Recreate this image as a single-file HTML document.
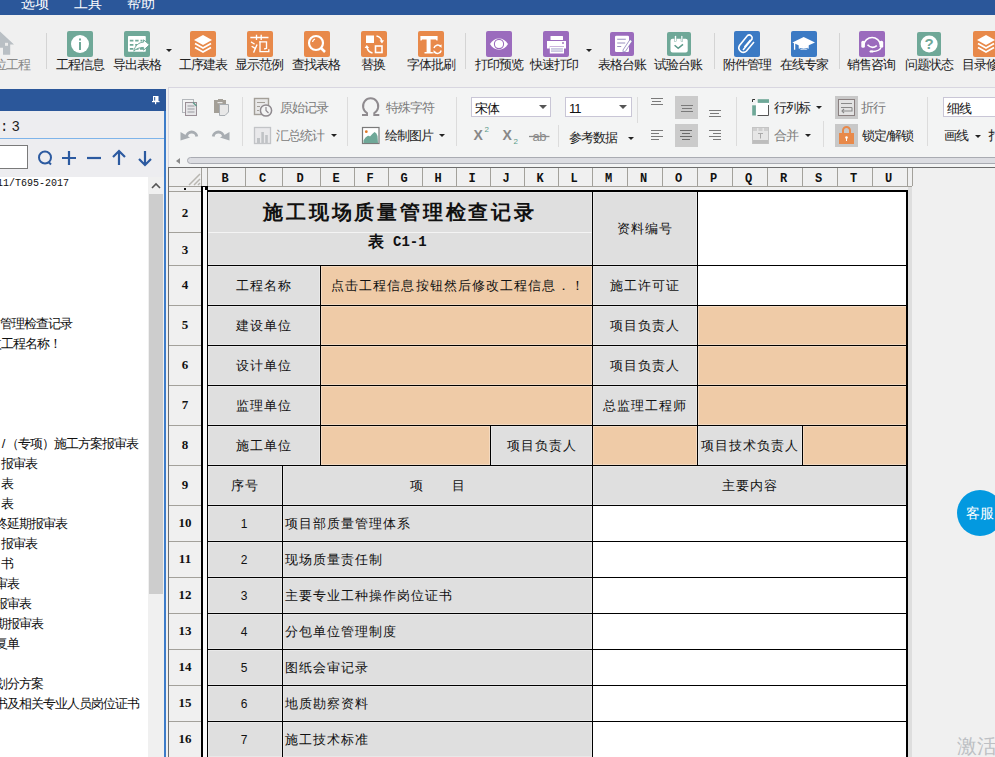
<!DOCTYPE html><html><head><meta charset="utf-8"><style>
*{margin:0;padding:0;box-sizing:border-box}
html,body{width:995px;height:757px;overflow:hidden;background:#f0f0f0;font-family:"Liberation Sans",sans-serif;position:relative}
.abs{position:absolute}
.menu{position:absolute;left:0;top:0;width:995px;height:15px;background:#2b579a;overflow:hidden}
.menu span{position:absolute;top:-5px;color:#fff;font-size:14px;line-height:16px}
.ic{position:absolute;top:31px;width:26px;height:26px;border-radius:2px}
.lbl{position:absolute;top:57px;font-size:13px;letter-spacing:-1px;line-height:16px;color:#222;white-space:nowrap;text-align:center}
.sep{position:absolute;width:1px;background:#d4d4d4}
.arr{position:absolute;width:0;height:0;border-left:3px solid transparent;border-right:3px solid transparent;border-top:3px solid #222}
.tb{position:absolute;font-size:13px;letter-spacing:-1px;line-height:14px;white-space:nowrap}
.cell{position:absolute;font-size:12px;white-space:nowrap;display:flex;align-items:center;justify-content:center;overflow:hidden;box-shadow:inset 0 0 0 1px rgba(255,255,255,.3)}
</style></head><body>
<div class="menu"><span style="left:21px">选项</span><span style="left:74px">工具</span><span style="left:127px">帮助</span></div><svg class="ic" style="left:67px;top:31px;width:26px;height:26px;background:#6fa898" width="26" height="26" viewBox="0 0 26 26"><circle cx="13" cy="13" r="9" fill="#ffffff"/><rect x="12" y="11" width="2" height="8" fill="#6fa898"/><rect x="12" y="7.5" width="2" height="2" fill="#6fa898"/></svg><div class="lbl" style="left:39.5px;width:80px">工程信息</div><svg class="ic" style="left:124px;top:31px;width:26px;height:26px;background:#6fa898" width="26" height="26" viewBox="0 0 26 26"><rect x="4" y="5" width="17.8" height="15.7" rx="0.8" fill="#ffffff"/><path d="M5.8 9.7h3.6M11.2 9.7h3.4M16.5 9.7h2M5.8 13.9h3.6M11.2 13.9h3.4M5.8 17.9h3.6M11.2 17.9h3.4M16 17.9h3" stroke="#6fa898" stroke-width="1.8"/><path d="M9.8 20.2 C11 14.5 15 11.3 19.6 11.1 L19.6 8.8 L25.4 13.8 L19.6 19.2 L19.6 16.4 C15.5 16.4 12.3 17.6 9.8 20.2Z" fill="#ffffff" stroke="#6fa898" stroke-width="1"/></svg><div class="lbl" style="left:97px;width:80px">导出表格</div><svg class="ic" style="left:190px;top:31px;width:26px;height:26px;background:#e8894a" width="26" height="26" viewBox="0 0 26 26"><path d="M13 4 L22 9 L13 14 L4 9Z" fill="#ffffff"/><path d="M5 12.5 L13 17 L21 12.5" fill="none" stroke="#ffffff" stroke-width="1.8"/><path d="M5 16.5 L13 21 L21 16.5" fill="none" stroke="#ffffff" stroke-width="1.8"/></svg><div class="lbl" style="left:163px;width:80px">工序建表</div><svg class="ic" style="left:247px;top:31px;width:26px;height:26px;background:#e8894a" width="26" height="26" viewBox="0 0 26 26"><g stroke="#ffffff" stroke-width="1.35" fill="none" stroke-linecap="square"><path d="M4 6.5 H20.8"/><path d="M9.5 4.3 V8.3 M14.2 4.3 V8.3"/><path d="M4.6 11.2 L7 12.8 M5.2 15.6 L7.5 17"/><path d="M6.8 21 L9.8 14.2"/><path d="M13 10.8 H19.5 V17.3 L17.8 17.8"/><path d="M13 10.8 V20.6 H21.8 V19"/></g></svg><div class="lbl" style="left:219px;width:80px">显示范例</div><svg class="ic" style="left:304px;top:31px;width:26px;height:26px;background:#e8894a" width="26" height="26" viewBox="0 0 26 26"><circle cx="12" cy="12" r="7" fill="none" stroke="#ffffff" stroke-width="2.2"/><path d="M17 17 L21 21" stroke="#ffffff" stroke-width="2.5"/><path d="M8.5 11 A4 4 0 0 1 11 8" stroke="#ffffff" stroke-width="1.3" fill="none"/></svg><div class="lbl" style="left:276px;width:80px">查找表格</div><svg class="ic" style="left:361px;top:31px;width:26px;height:26px;background:#e8894a" width="26" height="26" viewBox="0 0 26 26"><rect x="5" y="4.5" width="8" height="7.5" fill="#ffffff"/><rect x="14.5" y="15" width="6.5" height="6.5" fill="none" stroke="#ffffff" stroke-width="1.6"/><path d="M15.5 5 Q20 6 20.8 10" stroke="#ffffff" stroke-width="1.5" fill="none"/><path d="M18.6 9.5 L21 12.5 L23 9.3Z" fill="#ffffff"/><path d="M11.5 22 Q7 21 6 16.5" stroke="#ffffff" stroke-width="1.5" fill="none"/><path d="M3.6 17 L5.8 14 L8.2 17Z" fill="#ffffff"/></svg><div class="lbl" style="left:333px;width:80px">替换</div><svg class="ic" style="left:418px;top:31px;width:26px;height:26px;background:#e8894a" width="26" height="26" viewBox="0 0 26 26"><path d="M2.4 5 H19.6 V9.5 H18.5 L17.8 8.5 H12.6 V21 H14.8 V22.5 H6.5 V21 H8.6 V8.5 H4.2 L3.5 9.5 H2.4Z" fill="#ffffff"/><path d="M16 17 A3.7 3.7 0 0 1 22.6 15.6" stroke="#ffffff" stroke-width="1.5" fill="none"/><path d="M23.2 19.5 A3.7 3.7 0 0 1 16.4 20.6" stroke="#ffffff" stroke-width="1.5" fill="none"/><path d="M21 14.5 L23.6 13.5 L23.5 17Z" fill="#ffffff"/><path d="M18 21.5 L15.4 22.5 L15.6 19Z" fill="#ffffff"/></svg><div class="lbl" style="left:391px;width:80px">字体批刷</div><svg class="ic" style="left:486px;top:31px;width:26px;height:26px;background:#9b6bbd" width="26" height="26" viewBox="0 0 26 26"><path d="M4 13 C8 5.5 18 5.5 22 13 C18 20.5 8 20.5 4 13Z" fill="#ffffff"/><circle cx="13" cy="13" r="4.6" fill="#ffffff" stroke="#9b6bbd" stroke-width="1.1"/><circle cx="13" cy="13" r="2.6" fill="#ffffff"/></svg><div class="lbl" style="left:458.5px;width:80px">打印预览</div><svg class="ic" style="left:543px;top:31px;width:26px;height:26px;background:#9b6bbd" width="26" height="26" viewBox="0 0 26 26"><rect x="7.5" y="5" width="12.5" height="4" rx="0.5" fill="#ffffff"/><path d="M4 10 H23 V17.5 H21 V15 H6.8 V17.5 H4Z" fill="#ffffff"/><circle cx="20" cy="12" r="0.9" fill="#9b6bbd"/><rect x="6.8" y="15.5" width="14.2" height="7" fill="#ffffff"/><rect x="8" y="17" width="11.8" height="4" fill="#c9c7e0"/><path d="M8 18.3h11.8M8 19.7h11.8" stroke="#e8e8f2" stroke-width="0.5"/></svg><div class="lbl" style="left:514px;width:80px">快速打印</div><svg class="ic" style="left:610px;top:32px;width:24px;height:24px;background:#9b6bbd" width="24" height="24" viewBox="0 0 24 24"><rect x="5" y="3.7" width="14" height="16.3" rx="1.2" fill="#ffffff"/><path d="M7.2 7.3h8.6M7.2 11h8M7.2 14.5h4" stroke="#9a8fbf" stroke-width="1.1"/><path d="M13 18 L20 7.5 L22.3 9 L15.3 19.5 L13.2 20.2Z" fill="#ffffff" stroke="#7a6fb0" stroke-width="0.7"/></svg><div class="lbl" style="left:582px;width:80px">表格台账</div><svg class="ic" style="left:667px;top:32px;width:24px;height:24px;background:#6fa898" width="24" height="24" viewBox="0 0 24 24"><rect x="3.5" y="6.8" width="17.2" height="13.6" rx="2" fill="#ffffff"/><rect x="7.6" y="3.7" width="1.8" height="6" fill="#ffffff" stroke="#5a9a8a" stroke-width="0.4"/><rect x="14" y="3.7" width="1.8" height="6" fill="#ffffff" stroke="#5a9a8a" stroke-width="0.4"/><path d="M7.6 13.2 L11.2 16.3 L16 12.3" stroke="#5a9a8a" stroke-width="1.5" fill="none"/></svg><div class="lbl" style="left:638px;width:80px">试验台账</div><svg class="ic" style="left:734px;top:31px;width:26px;height:26px;background:#3b7ac4" width="26" height="26" viewBox="0 0 26 26"><path d="M9 19 L18 8 A3 3 0 0 0 13.5 4.5 L5.5 14.5 A4.5 4.5 0 0 0 12.5 20 L20 11" fill="none" stroke="#ffffff" stroke-width="1.6"/><path d="M10.5 16 L16.5 9" stroke="#ffffff" stroke-width="1.6"/></svg><div class="lbl" style="left:707px;width:80px">附件管理</div><svg class="ic" style="left:791px;top:31px;width:26px;height:26px;background:#3b7ac4" width="26" height="26" viewBox="0 0 26 26"><path d="M1.4 11.5 L12.7 6 L24 11.5 L12.7 16.4Z" fill="#ffffff"/><path d="M7.7 13.5 V17.5 Q12.7 20.5 17.7 17.5 V13.5 L12.7 16Z" fill="#ffffff"/><path d="M8.5 17.3 Q12.7 19 17 17.3" stroke="#3b7ac4" stroke-width="0.8" fill="none"/><path d="M3.6 12 V18.7" stroke="#ffffff" stroke-width="1.3"/></svg><div class="lbl" style="left:764px;width:80px">在线专家</div><svg class="ic" style="left:859px;top:31px;width:26px;height:26px;background:#9b6bbd" width="26" height="26" viewBox="0 0 26 26"><path d="M4.6 14 A8.6 8.8 0 0 1 21.6 14" stroke="#ffffff" stroke-width="1.6" fill="none"/><rect x="2.3" y="9.8" width="3.6" height="7" rx="1.6" fill="#ffffff"/><rect x="20.6" y="9.8" width="3.6" height="7" rx="1.6" fill="#ffffff"/><path d="M8.5 13.8 Q13 18.5 17.8 14.6" stroke="#ffffff" stroke-width="1.6" fill="none"/><path d="M22 16.5 Q21 20 13.5 20.5" stroke="#ffffff" stroke-width="1.3" fill="none"/><ellipse cx="12.5" cy="20.4" rx="2" ry="1.2" fill="#ffffff"/></svg><div class="lbl" style="left:831px;width:80px">销售咨询</div><svg class="ic" style="left:917px;top:32px;width:24px;height:24px;background:#6fa898" width="24" height="24" viewBox="0 0 24 24"><circle cx="12.15" cy="11.9" r="8.5" fill="#ffffff"/><text x="12.2" y="17.1" text-anchor="middle" font-size="15" font-weight="bold" fill="#6fa898" font-family="Liberation Sans">?</text></svg><div class="lbl" style="left:889px;width:80px">问题状态</div><svg class="ic" style="left:973px;top:31px;width:26px;height:26px;background:#e8894a" width="26" height="26" viewBox="0 0 26 26"><path d="M13 4 L22 9 L13 14 L4 9Z" fill="#ffffff"/><path d="M5 12.5 L13 17 L21 12.5" fill="none" stroke="#ffffff" stroke-width="1.8"/><path d="M5 16.5 L13 21 L21 16.5" fill="none" stroke="#ffffff" stroke-width="1.8"/></svg><div class="lbl" style="left:946px;width:80px">目录修改</div><svg class="abs" style="left:0;top:30px" width="16" height="26" viewBox="0 0 16 26"><path d="M0 1.6 L14 14.5 L10.2 14.5 L10.2 24.7 L3 24.7 L3 17.8 L0 17.8 Z" fill="#b9bfc4"/><rect x="5" y="12.8" width="3" height="3" fill="#ececec"/></svg><div class="lbl" style="left:-6px;width:44px;color:#888;text-align:left">位工程</div><div class="sep" style="left:46px;top:33px;height:36px"></div><div class="sep" style="left:465px;top:33px;height:36px"></div><div class="sep" style="left:714px;top:33px;height:36px"></div><div class="sep" style="left:839px;top:33px;height:36px"></div><div class="arr" style="left:166px;top:49px"></div><div class="arr" style="left:586px;top:49px"></div><div class="abs" style="left:0;top:89px;width:166px;height:22px;background:#2b579a"></div><svg class="abs" style="left:151px;top:95px" width="10" height="10" viewBox="0 0 10 10"><rect x="2" y="1" width="5.5" height="5.5" fill="#fff"/><rect x="3.2" y="2" width="1" height="3.6" fill="#2b579a"/><rect x="1" y="6" width="7.5" height="1.2" fill="#fff"/><rect x="4" y="7" width="1.2" height="2.2" fill="#fff"/></svg><div class="abs" style="left:0;top:111px;width:164px;height:27px;background:#ededf0"></div><div class="abs" style="left:0;top:119px;font-size:14px;line-height:16px;color:#222;font-family:'Liberation Mono',monospace">:<span style="color:#222;margin-left:3px">3</span></div><div class="abs" style="left:0;top:138px;width:164px;height:1px;background:#7eb4ea"></div><div class="abs" style="left:0;top:139px;width:164px;height:38px;background:#ededf0"></div><div class="abs" style="left:-2px;top:145px;width:30px;height:24px;background:#fff;border:1px solid #7a7a7a"></div><svg class="abs" style="left:36px;top:148px" width="120" height="22" viewBox="0 0 120 22"><circle cx="9" cy="9.5" r="6" fill="none" stroke="#2c5aa0" stroke-width="2"/><path d="M12.5 14 L15 16.5" stroke="#2c5aa0" stroke-width="2"/><path d="M26 10h14M33 3v14" stroke="#2c5aa0" stroke-width="2.2"/><path d="M51 10h14" stroke="#2c5aa0" stroke-width="2.2"/><path d="M83 3v14M77 9l6-6 6 6" stroke="#2c5aa0" stroke-width="2.2" fill="none"/><path d="M109 3v14M103 11l6 6 6-6" stroke="#2c5aa0" stroke-width="2.2" fill="none"/></svg><div class="abs" style="left:0;top:177px;width:148px;height:580px;background:#fff"></div><div class="abs" style="left:164px;top:111px;width:2px;height:646px;background:#3d7cc9"></div><div class="abs" style="left:-3px;top:177px;height:20px;line-height:14px;font-size:10px;letter-spacing:0px;color:#111;white-space:nowrap;font-family:'Liberation Mono', monospace">11/T695-2017</div><div class="abs" style="left:0px;top:317px;height:20px;line-height:14px;font-size:13px;letter-spacing:-1px;color:#111;white-space:nowrap;font-family:'Liberation Sans', sans-serif">管理检查记录</div><div class="abs" style="left:-11px;top:337px;height:20px;line-height:14px;font-size:13px;letter-spacing:-1px;color:#111;white-space:nowrap;font-family:'Liberation Sans', sans-serif">改工程名称！</div><div class="abs" style="left:0px;top:437px;height:20px;line-height:14px;font-size:13px;letter-spacing:-1px;color:#111;white-space:nowrap;font-family:'Liberation Sans', sans-serif"><span style="display:inline-block;width:6px;text-align:center">/</span>（专项）施工方案报审表</div><div class="abs" style="left:1px;top:457px;height:20px;line-height:14px;font-size:13px;letter-spacing:-1px;color:#111;white-space:nowrap;font-family:'Liberation Sans', sans-serif">报审表</div><div class="abs" style="left:1px;top:477px;height:20px;line-height:14px;font-size:13px;letter-spacing:-1px;color:#111;white-space:nowrap;font-family:'Liberation Sans', sans-serif">表</div><div class="abs" style="left:1px;top:497px;height:20px;line-height:14px;font-size:13px;letter-spacing:-1px;color:#111;white-space:nowrap;font-family:'Liberation Sans', sans-serif">表</div><div class="abs" style="left:-5px;top:517px;height:20px;line-height:14px;font-size:13px;letter-spacing:-1px;color:#111;white-space:nowrap;font-family:'Liberation Sans', sans-serif">终延期报审表</div><div class="abs" style="left:1px;top:537px;height:20px;line-height:14px;font-size:13px;letter-spacing:-1px;color:#111;white-space:nowrap;font-family:'Liberation Sans', sans-serif">报审表</div><div class="abs" style="left:1px;top:557px;height:20px;line-height:14px;font-size:13px;letter-spacing:-1px;color:#111;white-space:nowrap;font-family:'Liberation Sans', sans-serif">书</div><div class="abs" style="left:-5px;top:577px;height:20px;line-height:14px;font-size:13px;letter-spacing:-1px;color:#111;white-space:nowrap;font-family:'Liberation Sans', sans-serif">审表</div><div class="abs" style="left:-5px;top:597px;height:20px;line-height:14px;font-size:13px;letter-spacing:-1px;color:#111;white-space:nowrap;font-family:'Liberation Sans', sans-serif">报审表</div><div class="abs" style="left:-5px;top:617px;height:20px;line-height:14px;font-size:13px;letter-spacing:-1px;color:#111;white-space:nowrap;font-family:'Liberation Sans', sans-serif">期报审表</div><div class="abs" style="left:-5px;top:637px;height:20px;line-height:14px;font-size:13px;letter-spacing:-1px;color:#111;white-space:nowrap;font-family:'Liberation Sans', sans-serif">复单</div><div class="abs" style="left:-5px;top:677px;height:20px;line-height:14px;font-size:13px;letter-spacing:-1px;color:#111;white-space:nowrap;font-family:'Liberation Sans', sans-serif">划分方案</div><div class="abs" style="left:-5px;top:697px;height:20px;line-height:14px;font-size:13px;letter-spacing:-1px;color:#111;white-space:nowrap;font-family:'Liberation Sans', sans-serif">书及相关专业人员岗位证书</div><div class="abs" style="left:148px;top:177px;width:16px;height:580px;background:#f0f0f0"></div><div class="abs" style="left:149px;top:194px;width:14px;height:400px;background:#cdcdcd"></div><svg class="abs" style="left:150px;top:181px" width="12" height="10" viewBox="0 0 12 10"><path d="M2 7 L6 3 L10 7" stroke="#555" stroke-width="1.6" fill="none"/></svg><div class="abs" style="left:168px;top:87px;width:827px;height:80px;background:#f3f4f4;border-top:1px solid #d8d6e0;border-left:1px solid #d8d6e0"></div><svg class="abs" style="left:175px;top:95px" width="60" height="55" viewBox="0 0 60 55"><rect x="7.5" y="4.5" width="11" height="13" fill="#f3f4f4" stroke="#b4b8bc" stroke-width="1"/><rect x="10.5" y="7.5" width="11" height="13" fill="#e6e6e8" stroke="#9a8f96" stroke-width="1"/><path d="M12.5 11h7M12.5 14h7M12.5 17h7" stroke="#9a9aa0" stroke-width="1"/><path d="M18 7.5 L21.5 11" stroke="#5a9a8a" stroke-width="1.2"/><rect x="39" y="5" width="12" height="13" fill="#a39f97"/><rect x="43" y="4" width="5" height="2.5" fill="#a39f97"/><rect x="42.5" y="7" width="5" height="1.2" fill="#e8e8e8"/><path d="M44.5 9.5 H53.5 V17 L50 20.5 H44.5 Z" fill="#e8e8e8" stroke="#a8adb2" stroke-width="1"/><path d="M11.5 41.5 A5.2 5.2 0 0 1 21.8 41.5" stroke="#a8adb2" stroke-width="2.8" fill="none"/><path d="M5.5 37 L5.5 45.5 L15 42.5 Z" fill="#a8adb2"/><path d="M48.5 41.5 A5.2 5.2 0 0 0 38.2 41.5" stroke="#a8adb2" stroke-width="2.8" fill="none"/><path d="M54.5 37 L54.5 45.5 L45 42.5 Z" fill="#a8adb2"/></svg><div class="sep" style="left:242px;top:97px;height:49px;background:#dcdcdc"></div><svg class="abs" style="left:250px;top:95px" width="25" height="52" viewBox="0 0 25 52"><rect x="4.5" y="3.5" width="14" height="16" fill="#e8e8e8" stroke="#a39f98" stroke-width="1.4"/><path d="M7 7.5h8M7 11.5h3M7 15.5h2" stroke="#a39f98" stroke-width="1.2"/><circle cx="16" cy="15.5" r="5.6" fill="#f3f4f4" stroke="#8f8a8f" stroke-width="1.5"/><path d="M16 12v3.5l2.5 2.5" stroke="#8f8a8f" stroke-width="1.2" fill="none"/><rect x="4.5" y="32.5" width="16" height="16" fill="#e9e9eb" stroke="#c2c4c7" stroke-width="1.3"/><rect x="7" y="43" width="3" height="5" fill="#c0c3c6"/><rect x="11.3" y="37" width="2.6" height="11" fill="#c0c3c6"/><rect x="15.2" y="40" width="2.6" height="8" fill="#c0c3c6"/></svg><div class="tb" style="left:280px;top:101px;color:#7a7a7a">原始记录</div><div class="tb" style="left:276px;top:129px;color:#7a7a7a">汇总统计</div><div class="arr" style="left:331px;top:134px"></div><div class="sep" style="left:347px;top:97px;height:49px;background:#dcdcdc"></div><svg class="abs" style="left:355px;top:95px" width="30" height="52" viewBox="0 0 30 52"><path d="M7 20 H12 V18 A7.6 7.8 0 1 1 19.3 18 V20 H24.3" stroke="#8f8b8f" stroke-width="2" fill="none"/><rect x="7.5" y="32.5" width="16.5" height="16" fill="#fff" stroke="#7a7a7a" stroke-width="1.2"/><path d="M8.5 48 V45.5 Q10.5 41.5 12.5 41 Q14 40.5 15 41.5 Q17 39 19.5 37 Q21.5 37.5 22.5 41 L23 48 Z" fill="#6fa898"/><circle cx="11.3" cy="36.7" r="1.4" fill="#e07a28"/></svg><div class="tb" style="left:386px;top:101px;color:#7a7a7a">特殊字符</div><div class="tb" style="left:385px;top:129px;color:#222">绘制图片</div><div class="arr" style="left:439px;top:134px"></div><div class="sep" style="left:456px;top:97px;height:49px;background:#dcdcdc"></div><div class="abs" style="left:471px;top:97px;width:80px;height:20px;background:#fff;border:1px solid #c9c6d6"></div><div class="tb" style="left:475px;top:102px;color:#111">宋体</div><div class="arr" style="left:539px;top:105px;border-top-color:#555;border-left-width:4px;border-right-width:4px;border-top-width:4px"></div><div class="abs" style="left:565px;top:97px;width:67px;height:20px;background:#fff;border:1px solid #c9c6d6"></div><div class="tb" style="left:569px;top:102px;color:#111">11</div><div class="arr" style="left:619px;top:105px;border-top-color:#555;border-left-width:4px;border-right-width:4px;border-top-width:4px"></div><div class="sep" style="left:637px;top:97px;height:26px;background:#dcdcdc"></div><div class="sep" style="left:558px;top:125px;height:22px;background:#dcdcdc"></div><svg class="abs" style="left:465px;top:118px" width="95" height="32" viewBox="0 0 95 32"><text x="8.5" y="22.3" font-size="14" font-weight="bold" fill="#888" font-family="Liberation Sans">X</text><text x="19.5" y="14" font-size="8" fill="#5a9a8a" font-family="Liberation Sans">2</text><text x="37.5" y="22.3" font-size="14" font-weight="bold" fill="#888" font-family="Liberation Sans">X</text><text x="48.5" y="26" font-size="8" fill="#5a9a8a" font-family="Liberation Sans">2</text><text x="67.5" y="22.5" font-size="13" fill="#8a8a8a" font-family="Liberation Sans" letter-spacing="-0.5">ab</text><path d="M64 18.5 H84.5" stroke="#8a8a8a" stroke-width="1.3"/></svg><div class="tb" style="left:569px;top:131px;color:#222">参考数据</div><div class="arr" style="left:628px;top:137px"></div><div class="abs" style="left:675px;top:96px;width:23px;height:23px;background:#cbcbcb"></div><div class="abs" style="left:675px;top:124px;width:23px;height:23px;background:#cbcbcb"></div><div class="abs" style="left:651px;top:98px;width:12px;height:1px;background:#7a7a7a"></div><div class="abs" style="left:652px;top:101px;width:9px;height:1px;background:#7a7a7a"></div><div class="abs" style="left:651px;top:104px;width:12px;height:1px;background:#7a7a7a"></div><div class="abs" style="left:681px;top:105px;width:12px;height:1px;background:#7a7a7a"></div><div class="abs" style="left:682px;top:108px;width:10px;height:1px;background:#7a7a7a"></div><div class="abs" style="left:681px;top:111px;width:12px;height:1px;background:#7a7a7a"></div><div class="abs" style="left:709px;top:110px;width:12px;height:1px;background:#7a7a7a"></div><div class="abs" style="left:710px;top:113px;width:9px;height:1px;background:#7a7a7a"></div><div class="abs" style="left:709px;top:116px;width:12px;height:1px;background:#7a7a7a"></div><div class="abs" style="left:651px;top:130px;width:12px;height:1px;background:#7a7a7a"></div><div class="abs" style="left:651px;top:133px;width:8px;height:1px;background:#7a7a7a"></div><div class="abs" style="left:651px;top:136px;width:12px;height:1px;background:#7a7a7a"></div><div class="abs" style="left:651px;top:139px;width:8px;height:1px;background:#7a7a7a"></div><div class="abs" style="left:680px;top:130px;width:12px;height:1px;background:#6a6a6a"></div><div class="abs" style="left:682px;top:133px;width:8px;height:1px;background:#6a6a6a"></div><div class="abs" style="left:680px;top:136px;width:12px;height:1px;background:#6a6a6a"></div><div class="abs" style="left:682px;top:139px;width:8px;height:1px;background:#6a6a6a"></div><div class="abs" style="left:709px;top:130px;width:12px;height:1px;background:#7a7a7a"></div><div class="abs" style="left:713px;top:133px;width:8px;height:1px;background:#7a7a7a"></div><div class="abs" style="left:709px;top:136px;width:12px;height:1px;background:#7a7a7a"></div><div class="abs" style="left:713px;top:139px;width:8px;height:1px;background:#7a7a7a"></div><div class="sep" style="left:736px;top:97px;height:49px;background:#dcdcdc"></div><svg class="abs" style="left:745px;top:92px" width="30" height="55" viewBox="0 0 30 55"><rect x="11" y="10.5" width="13" height="13" fill="#fff"/><rect x="12.7" y="7.2" width="11.3" height="3.7" fill="#6fa898"/><rect x="7.2" y="13.3" width="3.7" height="10.2" fill="#6fa898"/><path d="M7.5 10 V7.5 H10" stroke="#333" stroke-width="1" fill="none"/><path d="M23.5 13 V23.5 H12.5" stroke="#555" stroke-width="1" fill="none"/><rect x="7.5" y="35.5" width="16" height="16" fill="#e6e6e6" stroke="#c4c4c4" stroke-width="1"/><rect x="8" y="36" width="4" height="3" fill="#cfcfcf"/><rect x="13.5" y="36" width="4" height="3" fill="#cfcfcf"/><rect x="19" y="36" width="4" height="3" fill="#cfcfcf"/><rect x="8" y="48" width="15" height="3.5" fill="#bdbdbd"/><path d="M13 41.5h5M15.5 41.5v5" stroke="#aaa" stroke-width="1"/></svg><div class="tb" style="left:774px;top:101px;color:#222">行列标</div><div class="arr" style="left:816px;top:106px"></div><div class="tb" style="left:774px;top:129px;color:#7a7a7a">合并</div><div class="arr" style="left:805px;top:134px"></div><div class="sep" style="left:823px;top:121px;height:26px;background:#dcdcdc"></div><div class="abs" style="left:835px;top:96px;width:23px;height:23px;background:#c8c8c8"></div><svg class="abs" style="left:835px;top:96px" width="23" height="23" viewBox="0 0 23 23"><rect x="3.5" y="3.5" width="16" height="16" fill="#e3e3e3" stroke="#8a8080" stroke-width="1"/><path d="M6 7.5h11M6 11.5h11M17 11.5v3.5H7" stroke="#8a8a8a" stroke-width="1.1" fill="none"/><path d="M9 13 L7 15 L9 17" stroke="#8a8a8a" stroke-width="1.1" fill="none"/></svg><div class="tb" style="left:861px;top:101px;color:#7a7a7a">折行</div><div class="abs" style="left:835px;top:124px;width:23px;height:23px;background:#c8c8c8"></div><svg class="abs" style="left:835px;top:124px" width="23" height="23" viewBox="0 0 23 23"><path d="M8 9V6.5a3.5 3.5 0 0 1 7 0V9" stroke="#e8894a" stroke-width="2" fill="none"/><rect x="4" y="9" width="15" height="11" fill="#e8894a"/><circle cx="11.5" cy="13.5" r="1.3" fill="#fff"/><rect x="11" y="14" width="1" height="3" fill="#fff"/></svg><div class="tb" style="left:862px;top:129px;color:#222">锁定/解锁</div><div class="sep" style="left:927px;top:97px;height:49px;background:#dcdcdc"></div><div class="abs" style="left:943px;top:97px;width:60px;height:20px;background:#fff;border:1px solid #c9c6d6"></div><div class="tb" style="left:947px;top:102px;color:#111">细线</div><div class="tb" style="left:944px;top:129px;color:#222">画线</div><div class="arr" style="left:975px;top:135px"></div><div class="tb" style="left:988px;top:129px;color:#222">扌</div><div class="abs" style="left:176px;top:158px;width:0;height:0;border-top:3px solid transparent;border-bottom:3px solid transparent;border-right:4px solid #8a8a8a"></div><div class="abs" style="left:187px;top:157px;width:820px;height:7px;background:#dcdde2;border:1px solid #a9abb2;border-radius:4px"></div><div class="abs" style="left:168px;top:167px;width:827px;height:1px;background:#6d6d6d"></div><div class="abs" style="left:168px;top:167px;width:1px;height:590px;background:#6d6d6d"></div><div class="abs" style="left:169px;top:168px;width:743px;height:19px;background:#f0f0f0"></div><div class="abs" style="left:201px;top:168px;width:1px;height:18px;background:#a3a19b"></div><div class="abs" style="left:207px;top:168px;width:1px;height:18px;background:#a3a19b"></div><div class="abs" style="left:245px;top:168px;width:1px;height:18px;background:#a3a19b"></div><div class="abs" style="left:282px;top:168px;width:1px;height:18px;background:#a3a19b"></div><div class="abs" style="left:320px;top:168px;width:1px;height:18px;background:#a3a19b"></div><div class="abs" style="left:354px;top:168px;width:1px;height:18px;background:#a3a19b"></div><div class="abs" style="left:388px;top:168px;width:1px;height:18px;background:#a3a19b"></div><div class="abs" style="left:422px;top:168px;width:1px;height:18px;background:#a3a19b"></div><div class="abs" style="left:456px;top:168px;width:1px;height:18px;background:#a3a19b"></div><div class="abs" style="left:490px;top:168px;width:1px;height:18px;background:#a3a19b"></div><div class="abs" style="left:524px;top:168px;width:1px;height:18px;background:#a3a19b"></div><div class="abs" style="left:558px;top:168px;width:1px;height:18px;background:#a3a19b"></div><div class="abs" style="left:592px;top:168px;width:1px;height:18px;background:#a3a19b"></div><div class="abs" style="left:627px;top:168px;width:1px;height:18px;background:#a3a19b"></div><div class="abs" style="left:662px;top:168px;width:1px;height:18px;background:#a3a19b"></div><div class="abs" style="left:697px;top:168px;width:1px;height:18px;background:#a3a19b"></div><div class="abs" style="left:732px;top:168px;width:1px;height:18px;background:#a3a19b"></div><div class="abs" style="left:767px;top:168px;width:1px;height:18px;background:#a3a19b"></div><div class="abs" style="left:802px;top:168px;width:1px;height:18px;background:#a3a19b"></div><div class="abs" style="left:837px;top:168px;width:1px;height:18px;background:#a3a19b"></div><div class="abs" style="left:872px;top:168px;width:1px;height:18px;background:#a3a19b"></div><div class="abs" style="left:907px;top:168px;width:1px;height:18px;background:#a3a19b"></div><div class="abs" style="left:912px;top:168px;width:1px;height:18px;background:#a3a19b"></div><div class="abs" style="left:207px;top:170px;width:38px;height:17px;line-height:18px;text-align:center;font-size:12px;font-weight:bold;font-family:'Liberation Mono', monospace;color:#111;padding-right:2px">B</div><div class="abs" style="left:245px;top:170px;width:37px;height:17px;line-height:18px;text-align:center;font-size:12px;font-weight:bold;font-family:'Liberation Mono', monospace;color:#111;padding-right:2px">C</div><div class="abs" style="left:282px;top:170px;width:38px;height:17px;line-height:18px;text-align:center;font-size:12px;font-weight:bold;font-family:'Liberation Mono', monospace;color:#111;padding-right:2px">D</div><div class="abs" style="left:320px;top:170px;width:34px;height:17px;line-height:18px;text-align:center;font-size:12px;font-weight:bold;font-family:'Liberation Mono', monospace;color:#111;padding-right:2px">E</div><div class="abs" style="left:354px;top:170px;width:34px;height:17px;line-height:18px;text-align:center;font-size:12px;font-weight:bold;font-family:'Liberation Mono', monospace;color:#111;padding-right:2px">F</div><div class="abs" style="left:388px;top:170px;width:34px;height:17px;line-height:18px;text-align:center;font-size:12px;font-weight:bold;font-family:'Liberation Mono', monospace;color:#111;padding-right:2px">G</div><div class="abs" style="left:422px;top:170px;width:34px;height:17px;line-height:18px;text-align:center;font-size:12px;font-weight:bold;font-family:'Liberation Mono', monospace;color:#111;padding-right:2px">H</div><div class="abs" style="left:456px;top:170px;width:34px;height:17px;line-height:18px;text-align:center;font-size:12px;font-weight:bold;font-family:'Liberation Mono', monospace;color:#111;padding-right:2px">I</div><div class="abs" style="left:490px;top:170px;width:34px;height:17px;line-height:18px;text-align:center;font-size:12px;font-weight:bold;font-family:'Liberation Mono', monospace;color:#111;padding-right:2px">J</div><div class="abs" style="left:524px;top:170px;width:34px;height:17px;line-height:18px;text-align:center;font-size:12px;font-weight:bold;font-family:'Liberation Mono', monospace;color:#111;padding-right:2px">K</div><div class="abs" style="left:558px;top:170px;width:34px;height:17px;line-height:18px;text-align:center;font-size:12px;font-weight:bold;font-family:'Liberation Mono', monospace;color:#111;padding-right:2px">L</div><div class="abs" style="left:592px;top:170px;width:35px;height:17px;line-height:18px;text-align:center;font-size:12px;font-weight:bold;font-family:'Liberation Mono', monospace;color:#111;padding-right:2px">M</div><div class="abs" style="left:627px;top:170px;width:35px;height:17px;line-height:18px;text-align:center;font-size:12px;font-weight:bold;font-family:'Liberation Mono', monospace;color:#111;padding-right:2px">N</div><div class="abs" style="left:662px;top:170px;width:35px;height:17px;line-height:18px;text-align:center;font-size:12px;font-weight:bold;font-family:'Liberation Mono', monospace;color:#111;padding-right:2px">O</div><div class="abs" style="left:697px;top:170px;width:35px;height:17px;line-height:18px;text-align:center;font-size:12px;font-weight:bold;font-family:'Liberation Mono', monospace;color:#111;padding-right:2px">P</div><div class="abs" style="left:732px;top:170px;width:35px;height:17px;line-height:18px;text-align:center;font-size:12px;font-weight:bold;font-family:'Liberation Mono', monospace;color:#111;padding-right:2px">Q</div><div class="abs" style="left:767px;top:170px;width:35px;height:17px;line-height:18px;text-align:center;font-size:12px;font-weight:bold;font-family:'Liberation Mono', monospace;color:#111;padding-right:2px">R</div><div class="abs" style="left:802px;top:170px;width:35px;height:17px;line-height:18px;text-align:center;font-size:12px;font-weight:bold;font-family:'Liberation Mono', monospace;color:#111;padding-right:2px">S</div><div class="abs" style="left:837px;top:170px;width:35px;height:17px;line-height:18px;text-align:center;font-size:12px;font-weight:bold;font-family:'Liberation Mono', monospace;color:#111;padding-right:2px">T</div><div class="abs" style="left:872px;top:170px;width:35px;height:17px;line-height:18px;text-align:center;font-size:12px;font-weight:bold;font-family:'Liberation Mono', monospace;color:#111;padding-right:2px">U</div><div class="abs" style="left:169px;top:186px;width:743px;height:1px;background:#a3a19b"></div><svg class="abs" style="left:186px;top:170px" width="15" height="16" viewBox="0 0 15 16"><path d="M14 4 L3 15 M14 9 L8 15 M14 13 L12 15" stroke="#b8b6b0" stroke-width="1.5"/></svg><div class="abs" style="left:908px;top:187px;width:4px;height:570px;background:#dedede"></div><div class="abs" style="left:169px;top:187px;width:32px;height:570px;background:#f0f0f0"></div><div class="abs" style="left:169px;top:191px;width:32px;height:1px;background:#a3a19b"></div><div class="abs" style="left:169px;top:232px;width:32px;height:1px;background:#a3a19b"></div><div class="abs" style="left:169px;top:265px;width:32px;height:1px;background:#a3a19b"></div><div class="abs" style="left:169px;top:305px;width:32px;height:1px;background:#a3a19b"></div><div class="abs" style="left:169px;top:345px;width:32px;height:1px;background:#a3a19b"></div><div class="abs" style="left:169px;top:385px;width:32px;height:1px;background:#a3a19b"></div><div class="abs" style="left:169px;top:425px;width:32px;height:1px;background:#a3a19b"></div><div class="abs" style="left:169px;top:465px;width:32px;height:1px;background:#a3a19b"></div><div class="abs" style="left:169px;top:505px;width:32px;height:1px;background:#a3a19b"></div><div class="abs" style="left:169px;top:541px;width:32px;height:1px;background:#a3a19b"></div><div class="abs" style="left:169px;top:577px;width:32px;height:1px;background:#a3a19b"></div><div class="abs" style="left:169px;top:613px;width:32px;height:1px;background:#a3a19b"></div><div class="abs" style="left:169px;top:649px;width:32px;height:1px;background:#a3a19b"></div><div class="abs" style="left:169px;top:685px;width:32px;height:1px;background:#a3a19b"></div><div class="abs" style="left:169px;top:721px;width:32px;height:1px;background:#a3a19b"></div><div class="abs" style="left:169px;top:191px;width:32px;height:41px;line-height:41px;text-align:center;font-size:13px;font-weight:bold;font-family:'Liberation Serif', serif;color:#111;padding-top:1px">2</div><div class="abs" style="left:169px;top:232px;width:32px;height:33px;line-height:33px;text-align:center;font-size:13px;font-weight:bold;font-family:'Liberation Serif', serif;color:#111;padding-top:1px">3</div><div class="abs" style="left:169px;top:265px;width:32px;height:40px;line-height:40px;text-align:center;font-size:13px;font-weight:bold;font-family:'Liberation Serif', serif;color:#111;padding-top:0px">4</div><div class="abs" style="left:169px;top:305px;width:32px;height:40px;line-height:40px;text-align:center;font-size:13px;font-weight:bold;font-family:'Liberation Serif', serif;color:#111;padding-top:0px">5</div><div class="abs" style="left:169px;top:345px;width:32px;height:40px;line-height:40px;text-align:center;font-size:13px;font-weight:bold;font-family:'Liberation Serif', serif;color:#111;padding-top:0px">6</div><div class="abs" style="left:169px;top:385px;width:32px;height:40px;line-height:40px;text-align:center;font-size:13px;font-weight:bold;font-family:'Liberation Serif', serif;color:#111;padding-top:0px">7</div><div class="abs" style="left:169px;top:425px;width:32px;height:40px;line-height:40px;text-align:center;font-size:13px;font-weight:bold;font-family:'Liberation Serif', serif;color:#111;padding-top:0px">8</div><div class="abs" style="left:169px;top:465px;width:32px;height:40px;line-height:40px;text-align:center;font-size:13px;font-weight:bold;font-family:'Liberation Serif', serif;color:#111;padding-top:0px">9</div><div class="abs" style="left:169px;top:505px;width:32px;height:36px;line-height:36px;text-align:center;font-size:13px;font-weight:bold;font-family:'Liberation Serif', serif;color:#111;padding-top:0px">10</div><div class="abs" style="left:169px;top:541px;width:32px;height:36px;line-height:36px;text-align:center;font-size:13px;font-weight:bold;font-family:'Liberation Serif', serif;color:#111;padding-top:0px">11</div><div class="abs" style="left:169px;top:577px;width:32px;height:36px;line-height:36px;text-align:center;font-size:13px;font-weight:bold;font-family:'Liberation Serif', serif;color:#111;padding-top:0px">12</div><div class="abs" style="left:169px;top:613px;width:32px;height:36px;line-height:36px;text-align:center;font-size:13px;font-weight:bold;font-family:'Liberation Serif', serif;color:#111;padding-top:0px">13</div><div class="abs" style="left:169px;top:649px;width:32px;height:36px;line-height:36px;text-align:center;font-size:13px;font-weight:bold;font-family:'Liberation Serif', serif;color:#111;padding-top:0px">14</div><div class="abs" style="left:169px;top:685px;width:32px;height:36px;line-height:36px;text-align:center;font-size:13px;font-weight:bold;font-family:'Liberation Serif', serif;color:#111;padding-top:0px">15</div><div class="abs" style="left:169px;top:721px;width:32px;height:36px;line-height:36px;text-align:center;font-size:13px;font-weight:bold;font-family:'Liberation Serif', serif;color:#111;padding-top:0px">16</div><div class="abs" style="left:184px;top:188px;width:2px;height:2px;background:#111"></div><div class="abs" style="left:201px;top:186px;width:2px;height:571px;background:#000"></div><div class="abs" style="left:203px;top:187px;width:4px;height:570px;background:#fafafa"></div><div class="abs" style="left:201px;top:186px;width:7px;height:1px;background:#000"></div><div class="abs" style="left:205px;top:187px;width:3px;height:3px;background:#000"></div><div class="cell" style="left:207px;top:191px;width:386px;height:75px;background:#dfdfdf;border:1px solid #000;justify-content:center;"></div><div class="abs" style="left:208px;top:232px;width:384px;height:1px;background:#f4f4f4"></div><div class="abs" style="left:207px;top:192px;width:386px;height:40px;display:flex;align-items:center;justify-content:center;font-size:20px;font-weight:bold;letter-spacing:2.8px;color:#111;white-space:nowrap">施工现场质量管理检查记录</div><div class="abs" style="left:368px;top:233px;font-size:16px;line-height:18px;font-weight:bold;color:#111;white-space:nowrap">表</div><div class="abs" style="left:393px;top:233px;font-size:14px;line-height:18px;font-weight:bold;color:#111;white-space:nowrap;font-family:'Liberation Mono', monospace">C1-1</div><div class="cell" style="left:592px;top:191px;width:106px;height:75px;background:#dfdfdf;border:1px solid #000;justify-content:center;letter-spacing:1px;color:#111;font-size:13px">资料编号</div><div class="cell" style="left:697px;top:191px;width:211px;height:75px;background:#ffffff;border:1px solid #000;justify-content:center;"></div><div class="cell" style="left:207px;top:265px;width:114px;height:41px;background:#dfdfdf;border:1px solid #000;justify-content:center;letter-spacing:1px;color:#111;font-size:13px">工程名称</div><div class="cell" style="left:320px;top:265px;width:273px;height:41px;background:#efcba7;border:1px solid #000;justify-content:flex-start;letter-spacing:1px;color:#111;font-size:13px;letter-spacing:1.1px;padding-left:10px">点击工程信息按钮然后修改工程信息．！</div><div class="cell" style="left:592px;top:265px;width:106px;height:41px;background:#dfdfdf;border:1px solid #000;justify-content:center;letter-spacing:1px;color:#111;font-size:13px">施工许可证</div><div class="cell" style="left:697px;top:265px;width:211px;height:41px;background:#ffffff;border:1px solid #000;justify-content:center;"></div><div class="cell" style="left:207px;top:305px;width:114px;height:41px;background:#dfdfdf;border:1px solid #000;justify-content:center;letter-spacing:1px;color:#111;font-size:13px">建设单位</div><div class="cell" style="left:320px;top:305px;width:273px;height:41px;background:#efcba7;border:1px solid #000;justify-content:center;"></div><div class="cell" style="left:592px;top:305px;width:106px;height:41px;background:#dfdfdf;border:1px solid #000;justify-content:center;letter-spacing:1px;color:#111;font-size:13px">项目负责人</div><div class="cell" style="left:697px;top:305px;width:211px;height:41px;background:#efcba7;border:1px solid #000;justify-content:center;"></div><div class="cell" style="left:207px;top:345px;width:114px;height:41px;background:#dfdfdf;border:1px solid #000;justify-content:center;letter-spacing:1px;color:#111;font-size:13px">设计单位</div><div class="cell" style="left:320px;top:345px;width:273px;height:41px;background:#efcba7;border:1px solid #000;justify-content:center;"></div><div class="cell" style="left:592px;top:345px;width:106px;height:41px;background:#dfdfdf;border:1px solid #000;justify-content:center;letter-spacing:1px;color:#111;font-size:13px">项目负责人</div><div class="cell" style="left:697px;top:345px;width:211px;height:41px;background:#efcba7;border:1px solid #000;justify-content:center;"></div><div class="cell" style="left:207px;top:385px;width:114px;height:41px;background:#dfdfdf;border:1px solid #000;justify-content:center;letter-spacing:1px;color:#111;font-size:13px">监理单位</div><div class="cell" style="left:320px;top:385px;width:273px;height:41px;background:#efcba7;border:1px solid #000;justify-content:center;"></div><div class="cell" style="left:592px;top:385px;width:106px;height:41px;background:#dfdfdf;border:1px solid #000;justify-content:center;letter-spacing:1px;color:#111;font-size:13px">总监理工程师</div><div class="cell" style="left:697px;top:385px;width:211px;height:41px;background:#efcba7;border:1px solid #000;justify-content:center;"></div><div class="cell" style="left:207px;top:425px;width:114px;height:41px;background:#dfdfdf;border:1px solid #000;justify-content:center;letter-spacing:1px;color:#111;font-size:13px">施工单位</div><div class="cell" style="left:320px;top:425px;width:171px;height:41px;background:#efcba7;border:1px solid #000;justify-content:center;"></div><div class="cell" style="left:490px;top:425px;width:103px;height:41px;background:#dfdfdf;border:1px solid #000;justify-content:center;letter-spacing:1px;color:#111;font-size:13px">项目负责人</div><div class="cell" style="left:592px;top:425px;width:106px;height:41px;background:#efcba7;border:1px solid #000;justify-content:center;"></div><div class="cell" style="left:697px;top:425px;width:106px;height:41px;background:#dfdfdf;border:1px solid #000;justify-content:center;letter-spacing:1px;color:#111;font-size:13px">项目技术负责人</div><div class="cell" style="left:802px;top:425px;width:106px;height:41px;background:#efcba7;border:1px solid #000;justify-content:center;"></div><div class="cell" style="left:207px;top:465px;width:76px;height:41px;background:#dfdfdf;border:1px solid #000;justify-content:center;letter-spacing:1px;color:#111;font-size:13px">序号</div><div class="cell" style="left:282px;top:465px;width:311px;height:41px;background:#dfdfdf;border:1px solid #000;justify-content:center;letter-spacing:1px;color:#111;font-size:13px">项　　目</div><div class="cell" style="left:592px;top:465px;width:316px;height:41px;background:#dfdfdf;border:1px solid #000;justify-content:center;letter-spacing:1px;color:#111;font-size:13px">主要内容</div><div class="cell" style="left:207px;top:505px;width:76px;height:37px;background:#dfdfdf;border:1px solid #000;justify-content:center;color:#111;padding-right:2px">1</div><div class="cell" style="left:282px;top:505px;width:311px;height:37px;background:#dfdfdf;border:1px solid #000;justify-content:flex-start;letter-spacing:1px;color:#111;font-size:13px;padding-left:2px">项目部质量管理体系</div><div class="cell" style="left:592px;top:505px;width:316px;height:37px;background:#ffffff;border:1px solid #000;justify-content:center;"></div><div class="cell" style="left:207px;top:541px;width:76px;height:37px;background:#dfdfdf;border:1px solid #000;justify-content:center;color:#111;padding-right:2px">2</div><div class="cell" style="left:282px;top:541px;width:311px;height:37px;background:#dfdfdf;border:1px solid #000;justify-content:flex-start;letter-spacing:1px;color:#111;font-size:13px;padding-left:2px">现场质量责任制</div><div class="cell" style="left:592px;top:541px;width:316px;height:37px;background:#ffffff;border:1px solid #000;justify-content:center;"></div><div class="cell" style="left:207px;top:577px;width:76px;height:37px;background:#dfdfdf;border:1px solid #000;justify-content:center;color:#111;padding-right:2px">3</div><div class="cell" style="left:282px;top:577px;width:311px;height:37px;background:#dfdfdf;border:1px solid #000;justify-content:flex-start;letter-spacing:1px;color:#111;font-size:13px;padding-left:2px">主要专业工种操作岗位证书</div><div class="cell" style="left:592px;top:577px;width:316px;height:37px;background:#ffffff;border:1px solid #000;justify-content:center;"></div><div class="cell" style="left:207px;top:613px;width:76px;height:37px;background:#dfdfdf;border:1px solid #000;justify-content:center;color:#111;padding-right:2px">4</div><div class="cell" style="left:282px;top:613px;width:311px;height:37px;background:#dfdfdf;border:1px solid #000;justify-content:flex-start;letter-spacing:1px;color:#111;font-size:13px;padding-left:2px">分包单位管理制度</div><div class="cell" style="left:592px;top:613px;width:316px;height:37px;background:#ffffff;border:1px solid #000;justify-content:center;"></div><div class="cell" style="left:207px;top:649px;width:76px;height:37px;background:#dfdfdf;border:1px solid #000;justify-content:center;color:#111;padding-right:2px">5</div><div class="cell" style="left:282px;top:649px;width:311px;height:37px;background:#dfdfdf;border:1px solid #000;justify-content:flex-start;letter-spacing:1px;color:#111;font-size:13px;padding-left:2px">图纸会审记录</div><div class="cell" style="left:592px;top:649px;width:316px;height:37px;background:#ffffff;border:1px solid #000;justify-content:center;"></div><div class="cell" style="left:207px;top:685px;width:76px;height:37px;background:#dfdfdf;border:1px solid #000;justify-content:center;color:#111;padding-right:2px">6</div><div class="cell" style="left:282px;top:685px;width:311px;height:37px;background:#dfdfdf;border:1px solid #000;justify-content:flex-start;letter-spacing:1px;color:#111;font-size:13px;padding-left:2px">地质勘察资料</div><div class="cell" style="left:592px;top:685px;width:316px;height:37px;background:#ffffff;border:1px solid #000;justify-content:center;"></div><div class="cell" style="left:207px;top:721px;width:76px;height:37px;background:#dfdfdf;border:1px solid #000;justify-content:center;color:#111;padding-right:2px">7</div><div class="cell" style="left:282px;top:721px;width:311px;height:37px;background:#dfdfdf;border:1px solid #000;justify-content:flex-start;letter-spacing:1px;color:#111;font-size:13px;padding-left:2px">施工技术标准</div><div class="cell" style="left:592px;top:721px;width:316px;height:37px;background:#ffffff;border:1px solid #000;justify-content:center;"></div><div class="abs" style="left:207px;top:190px;width:701px;height:2px;background:#000"></div><div class="abs" style="left:906px;top:190px;width:2px;height:567px;background:#000"></div><div class="abs" style="left:957px;top:490px;width:46px;height:46px;border-radius:50%;background:#0399e0"></div><div class="abs" style="left:966px;top:505px;font-size:14px;line-height:16px;color:#fff;white-space:nowrap">客服</div><div class="abs" style="left:957px;top:734px;font-size:20px;line-height:24px;color:#bdc0c4;white-space:nowrap">激活</div></body></html>
